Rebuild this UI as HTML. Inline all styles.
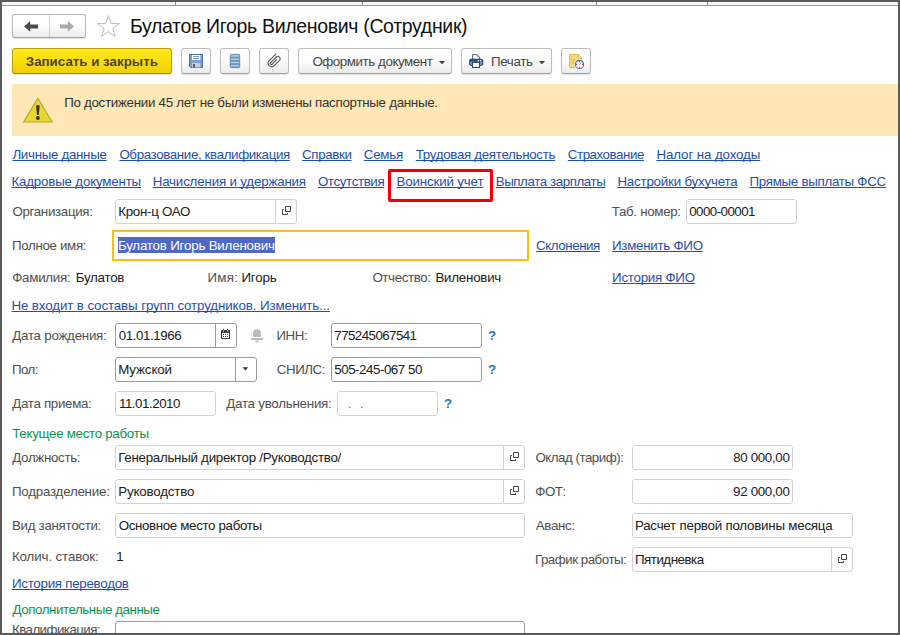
<!DOCTYPE html>
<html lang="ru">
<head>
<meta charset="utf-8">
<title>Булатов Игорь Виленович (Сотрудник)</title>
<style>
*{box-sizing:border-box}
html,body{margin:0;padding:0}
body{width:900px;height:635px;overflow:hidden;background:#fff;position:relative;font-family:"Liberation Sans",sans-serif;font-size:13px}
.abs,.t,.btn,.inp,.frame,svg{position:absolute}
.t{white-space:pre;line-height:16px;font-size:13.33px}
.ttl{font-size:19.5px;line-height:24px;color:#111}
.bb{font-weight:bold;color:#4b4628}
.bt{color:#444}
.msg{color:#333}
.lk{color:#1f4fae;text-decoration:underline;text-decoration-thickness:1px;text-decoration-skip-ink:none}
.lb{color:#505050}
.vl{color:#202020}
.sel{color:#fff}
.gr{color:#0c9254}
.q{font-weight:bold;color:#2175bf}
.dot{color:#777}
.btn{top:48px;height:26px;border:1px solid #bdbdbd;border-bottom-color:#a2a2a2;border-radius:3px;background:linear-gradient(#ffffff,#ffffff 40%,#ececec);box-shadow:0 1px 1px rgba(0,0,0,.12)}
.ybtn{background:linear-gradient(#ffe91e,#fbdc08 55%,#f1cf0c);border-color:#bba200;border-bottom-color:#9d8800}
.inp{height:25px;border:1px solid #d2d2d2;border-radius:3px;background:#fff}
.inp.dk{border-color:#9c9c9c}
.dv{position:absolute;top:0;bottom:0;width:1px;background:#d2d2d2}
.dk .dv{background:#9c9c9c}
</style>
</head>
<body>
<!-- nav buttons -->
<div class="btn" style="left:12px;top:14px;width:74px;height:24px;border-color:#b9b9b9;border-bottom-color:#9f9f9f"><div class="dv" style="left:36px;background:#d0d0d0"></div></div>
<svg style="left:12px;top:14px" width="74" height="24" viewBox="0 0 74 24">
  <path d="M12 12.4 L18.2 7 V10.4 H26 V14.4 H18.2 V17.8 Z" fill="#4a4a4a"/>
  <path d="M62 12.4 L55.8 7 V10.4 H48 V14.4 H55.8 V17.8 Z" fill="#a9a9a9"/>
</svg>
<!-- star -->
<svg style="left:96px;top:14px" width="26" height="24" viewBox="0 0 26 24">
  <path d="M12.4 1.6 L15.1 9.4 L23.4 9.5 L16.8 14.5 L19.2 22.4 L12.4 17.7 L5.6 22.4 L8 14.5 L1.4 9.5 L9.7 9.4 Z" fill="#fff" stroke="#b2b6bd" stroke-width=".9"/>
</svg>

<!-- toolbar -->
<div class="btn ybtn" style="left:12px;width:160px"></div>
<div class="btn" style="left:181px;width:30px"></div>
<div class="btn" style="left:220px;width:30px"></div>
<div class="btn" style="left:259px;width:30px"></div>
<div class="btn" style="left:298px;width:154px"></div>
<div class="btn" style="left:461px;width:91px"></div>
<div class="btn" style="left:561px;width:30px"></div>
<!-- toolbar icons -->
<svg style="left:188px;top:53px" width="16" height="16" viewBox="188 53 16 16">
  <path d="M189.5 54.5 H202.5 V67.4 H190.6 L189.5 66.3 Z" fill="#79a1d8" stroke="#4a6ea6" stroke-width="1"/>
  <rect x="192" y="55" width="8.3" height="5" fill="#fff"/>
  <rect x="193.2" y="56" width="6" height=".9" fill="#7391b6"/><rect x="193.2" y="58" width="6" height=".9" fill="#7391b6"/>
  <rect x="192" y="63" width="8.3" height="4.4" fill="#c9d1d6"/>
  <rect x="193.2" y="64" width="1.6" height="3.4" fill="#2c4568"/>
</svg>
<svg style="left:229px;top:53px" width="12" height="16" viewBox="229 53 12 16">
  <rect x="230.2" y="54.3" width="9.6" height="13.4" rx="1.2" fill="#6690b9" stroke="#5a82aa" stroke-width=".6"/>
  <g fill="#b3d0ec"><rect x="231" y="55.2" width="8" height="1.5"/><rect x="231" y="58.5" width="8" height="1.5"/><rect x="231" y="61.7" width="8" height="1.5"/><rect x="231" y="64.9" width="8" height="1.5"/></g>
</svg>
<svg style="left:259px;top:48px" width="30" height="26" viewBox="259 48 30 26">
  <g transform="translate(266.75,63.1) rotate(-45)"><path d="M12.8 0 H3.5 A3.52 3.52 0 0 0 3.5 7.04 H10.95 A2.34 2.34 0 0 0 10.95 2.37 H3.06 A1.06 1.06 0 0 0 3.06 4.5 H9.2" fill="none" stroke="#5c5c5c" stroke-width="1.15" stroke-linecap="round"/></g>
</svg>
<svg style="left:438px;top:60px" width="8" height="5" viewBox="0 0 8 5"><path d="M0.8 1 H7.2 L4 4.2 Z" fill="#3c3c3c"/></svg>
<svg style="left:538px;top:60px" width="8" height="5" viewBox="0 0 8 5"><path d="M0.8 1 H7.2 L4 4.2 Z" fill="#3c3c3c"/></svg>
<svg style="left:468px;top:53px" width="16" height="16" viewBox="468 53 16 16">
  <path d="M472.5 59.5 V54.6 H477 L479.5 57 V59.5 Z" fill="#fff" stroke="#56637c" stroke-width="1"/>
  <path d="M477 54.6 V57 H479.5 Z" fill="#7d8aa0"/>
  <rect x="469.6" y="59.2" width="13.2" height="6.2" rx="1.4" fill="#6f93c3" stroke="#1f426d" stroke-width="1"/>
  <rect x="470" y="59.5" width="12.4" height="2" fill="#254a78"/>
  <rect x="477.8" y="60" width="1.2" height="1.1" fill="#fff"/><rect x="480" y="60" width="1.2" height="1.1" fill="#fff"/>
  <rect x="472.5" y="62.5" width="7" height="5" fill="#fff" stroke="#2c4a70" stroke-width="1"/>
</svg>
<svg style="left:567px;top:52px" width="20" height="20" viewBox="567 52 20 20">
  <path d="M569.6 54.5 H578 L581.5 58 V67.4 H569.6 Z" fill="#f5da7a" stroke="#e0b83e" stroke-width="1"/>
  <path d="M578 54.5 V58 H581.5 Z" fill="#fbeeb8" stroke="#e0b83e" stroke-width=".8"/>
  <path d="M571.3 59.4 H575 M571.3 61.3 H574 M571.3 63.2 H575" stroke="#cdb877" stroke-width=".8"/>
  <circle cx="579.5" cy="64.4" r="5.2" fill="#fff"/>
  <circle cx="579.5" cy="64.4" r="4.1" fill="#fff" stroke="#3d77b6" stroke-width="1.2"/>
  <path d="M579.5 60.8 V62 M579.5 66.8 V68 M575.9 64.4 H577.1 M581.9 64.4 H583.1" stroke="#e0303a" stroke-width="1.1"/>
  <path d="M579.5 64.4 L581.2 62.8" stroke="#5b8fd0" stroke-width=".9"/>
</svg>

<!-- banner -->
<div class="abs" style="left:12px;top:84px;width:886px;height:52px;background:#ffe8b6"></div>
<svg style="left:22px;top:96px" width="32" height="28" viewBox="0 0 32 28">
  <path d="M15.9 2.2 L30.2 26 H1.6 Z" fill="#e9d533" stroke="#b9a425" stroke-width="1.2" stroke-linejoin="round"/>
  <path d="M14.1 9.8 Q15.9 8.4 17.7 9.8 L16.7 19 H15.1 Z" fill="#3a3200"/>
  <circle cx="15.9" cy="22" r="1.9" fill="#3a3200"/>
</svg>

<!-- red highlight -->
<div class="abs" style="left:388px;top:169px;width:105px;height:33px;border:3px solid #f00000;border-radius:2px"></div>

<!-- inputs -->
<div class="inp" style="left:115px;top:199px;width:182px"><div class="dv" style="left:159px"></div></div>
<div class="inp" style="left:686px;top:199px;width:111px"></div>
<div class="abs" style="left:112px;top:230px;width:417px;height:31px;border:2px solid #f7be17;background:#fff"></div>
<div class="abs" style="left:118px;top:237px;width:157px;height:16px;background:#4f68c6"></div>
<div class="inp dk" style="left:115px;top:323px;width:122px"><div class="dv" style="left:99px"></div></div>
<div class="inp dk" style="left:331px;top:323px;width:151px"></div>
<div class="inp dk" style="left:115px;top:357px;width:142px"><div class="dv" style="left:119px"></div></div>
<div class="inp dk" style="left:331px;top:357px;width:151px"></div>
<div class="inp" style="left:115px;top:391px;width:101px"></div>
<div class="inp" style="left:337px;top:391px;width:101px"></div>
<div class="inp" style="left:115px;top:445px;width:410px"><div class="dv" style="left:387px"></div></div>
<div class="inp" style="left:115px;top:479px;width:410px"><div class="dv" style="left:387px"></div></div>
<div class="inp" style="left:115px;top:513px;width:410px"></div>
<div class="inp" style="left:632px;top:445px;width:161px"></div>
<div class="inp" style="left:632px;top:479px;width:161px"></div>
<div class="inp" style="left:632px;top:513px;width:221px"></div>
<div class="inp" style="left:632px;top:547px;width:221px"><div class="dv" style="left:198px"></div></div>
<div class="inp dk" style="left:115px;top:621px;width:410px"></div>

<!-- open icons -->
<svg style="left:282px;top:206px" width="9" height="9" viewBox="0 0 9 9"><path d="M3.5 0.5 H8.5 V5.5 H3.5 Z M1.9 3.5 H0.5 V8.5 H5.5 V7.1" fill="none" stroke="#444"/></svg>
<svg style="left:510px;top:452px" width="9" height="9" viewBox="0 0 9 9"><path d="M3.5 0.5 H8.5 V5.5 H3.5 Z M1.9 3.5 H0.5 V8.5 H5.5 V7.1" fill="none" stroke="#444"/></svg>
<svg style="left:510px;top:486px" width="9" height="9" viewBox="0 0 9 9"><path d="M3.5 0.5 H8.5 V5.5 H3.5 Z M1.9 3.5 H0.5 V8.5 H5.5 V7.1" fill="none" stroke="#444"/></svg>
<svg style="left:838px;top:554px" width="9" height="9" viewBox="0 0 9 9"><path d="M3.5 0.5 H8.5 V5.5 H3.5 Z M1.9 3.5 H0.5 V8.5 H5.5 V7.1" fill="none" stroke="#444"/></svg>
<!-- calendar -->
<svg style="left:220px;top:328px" width="12" height="12" viewBox="220 328 12 12">
  <rect x="221" y="330" width="9" height="9" rx="1" fill="#3c3c3c"/>
  <rect x="222" y="333" width="7" height="5" fill="#fff"/>
  <rect x="223" y="328.8" width="1" height="1.6" fill="#3c3c3c"/><rect x="227" y="328.8" width="1" height="1.6" fill="#3c3c3c"/>
  <rect x="223" y="330.4" width="1" height="1.1" fill="#fff"/><rect x="227" y="330.4" width="1" height="1.1" fill="#fff"/>
  <g fill="#3c3c3c"><rect x="223" y="334" width="1" height="1"/><rect x="225" y="334" width="1" height="1"/><rect x="227" y="334" width="1" height="1"/><rect x="223" y="336" width="1" height="1"/><rect x="225" y="336" width="1" height="1"/><rect x="227" y="336" width="1" height="1"/></g>
</svg>
<!-- bell -->
<svg style="left:250px;top:328px" width="14" height="15" viewBox="250 328 14 15">
  <path d="M253 337 V333.2 A4 4 0 0 1 261 333.2 V337 Z" fill="#bdbdbd"/>
  <rect x="251" y="338" width="12" height="2" fill="#bdbdbd"/>
  <path d="M255 340.4 H259 A2 2 0 0 1 255 340.4 Z" fill="#bdbdbd"/>
</svg>
<!-- dropdown arrow -->
<svg style="left:242px;top:367px" width="7" height="4" viewBox="0 0 7 4"><path d="M0.6 0.3 H6.2 L3.4 3.4 Z" fill="#333"/></svg>

<span class="t ttl" style="left:129.92px;top:14px;letter-spacing:-0.335px;">Булатов Игорь Виленович (Сотрудник)</span>
<span class="t bb" style="left:25.81px;top:54px;">Записать и закрыть</span>
<span class="t bt" style="left:312.38px;top:54px;letter-spacing:-0.424px;">Оформить документ</span>
<span class="t bt" style="left:490.95px;top:54px;letter-spacing:-0.335px;">Печать</span>
<span class="t msg" style="left:64.15px;top:95px;letter-spacing:-0.282px;">По достижении 45 лет не были изменены паспортные данные.</span>
<span class="t lk" style="left:12.42px;top:147px;letter-spacing:-0.304px;">Личные данные</span>
<span class="t lk" style="left:119.38px;top:147px;letter-spacing:-0.368px;">Образование, квалификация</span>
<span class="t lk" style="left:302.12px;top:147px;letter-spacing:-0.382px;">Справки</span>
<span class="t lk" style="left:363.81px;top:147px;letter-spacing:-0.261px;">Семья</span>
<span class="t lk" style="left:415.77px;top:147px;letter-spacing:-0.311px;">Трудовая деятельность</span>
<span class="t lk" style="left:567.82px;top:147px;letter-spacing:-0.454px;">Страхование</span>
<span class="t lk" style="left:656.45px;top:147px;letter-spacing:-0.108px;">Налог на доходы</span>
<span class="t lk" style="left:11.45px;top:174px;letter-spacing:-0.185px;">Кадровые документы</span>
<span class="t lk" style="left:152.70px;top:174px;letter-spacing:-0.173px;">Начисления и удержания</span>
<span class="t lk" style="left:317.88px;top:174px;letter-spacing:-0.370px;">Отсутствия</span>
<span class="t lk" style="left:396.45px;top:174px;letter-spacing:-0.150px;">Воинский учет</span>
<span class="t lk" style="left:495.70px;top:174px;letter-spacing:-0.418px;">Выплата зарплаты</span>
<span class="t lk" style="left:617.45px;top:174px;letter-spacing:-0.208px;">Настройки бухучета</span>
<span class="t lk" style="left:749.45px;top:174px;letter-spacing:-0.278px;">Прямые выплаты ФСС</span>
<span class="t lb" style="left:12.38px;top:204px;letter-spacing:-0.321px;">Организация:</span>
<span class="t vl" style="left:118.20px;top:204px;letter-spacing:-0.284px;">Крон-ц ОАО</span>
<span class="t lb" style="left:611.67px;top:204px;letter-spacing:-0.304px;">Таб. номер:</span>
<span class="t vl" style="left:689.24px;top:204px;letter-spacing:-0.552px;">0000-00001</span>
<span class="t lb" style="left:11.95px;top:238px;letter-spacing:-0.337px;">Полное имя:</span>
<span class="t sel" style="left:117.95px;top:238px;letter-spacing:-0.198px;">Булатов Игорь Виленович</span>
<span class="t lk" style="left:536.07px;top:238px;letter-spacing:-0.439px;">Склонения</span>
<span class="t lk" style="left:612.05px;top:238px;letter-spacing:-0.265px;">Изменить ФИО</span>
<span class="t lb" style="left:12.25px;top:270px;letter-spacing:-0.271px;">Фамилия:</span>
<span class="t vl" style="left:75.70px;top:270px;letter-spacing:-0.244px;">Булатов</span>
<span class="t lb" style="left:207.45px;top:270px;letter-spacing:0.288px;">Имя:</span>
<span class="t vl" style="left:241.45px;top:270px;letter-spacing:-0.162px;">Игорь</span>
<span class="t lb" style="left:372.38px;top:270px;letter-spacing:-0.383px;">Отчество:</span>
<span class="t vl" style="left:435.45px;top:270px;letter-spacing:-0.236px;">Виленович</span>
<span class="t lk" style="left:612.05px;top:270px;letter-spacing:-0.244px;">История ФИО</span>
<span class="t lk" style="left:11.45px;top:298px;letter-spacing:-0.110px;">Не входит в составы групп сотрудников. Изменить...</span>
<span class="t lb" style="left:12.25px;top:328px;letter-spacing:-0.245px;">Дата рождения:</span>
<span class="t vl" style="left:118.74px;top:328px;letter-spacing:-0.407px;">01.01.1966</span>
<span class="t lb" style="left:276.45px;top:328px;letter-spacing:-0.442px;">ИНН:</span>
<span class="t vl" style="left:334.34px;top:328px;letter-spacing:-0.569px;">775245067541</span>
<span class="t q" style="left:487.95px;top:328px;">?</span>
<span class="t lb" style="left:11.95px;top:362px;letter-spacing:-0.533px;">Пол:</span>
<span class="t vl" style="left:118.20px;top:362px;letter-spacing:-0.113px;">Мужской</span>
<span class="t lb" style="left:276.81px;top:362px;letter-spacing:-0.447px;">СНИЛС:</span>
<span class="t vl" style="left:334.25px;top:362px;letter-spacing:-0.464px;">505-245-067 50</span>
<span class="t q" style="left:487.95px;top:362px;">?</span>
<span class="t lb" style="left:12.25px;top:396px;letter-spacing:-0.311px;">Дата приема:</span>
<span class="t vl" style="left:118.95px;top:396px;letter-spacing:-0.469px;">11.01.2010</span>
<span class="t lb" style="left:226.25px;top:396px;letter-spacing:-0.243px;">Дата увольнения:</span>
<span class="t dot" style="left:347.65px;top:396px;">.</span>
<span class="t dot" style="left:359.65px;top:396px;">.</span>
<span class="t q" style="left:443.95px;top:396px;">?</span>
<span class="t gr" style="left:12.27px;top:426px;letter-spacing:-0.294px;">Текущее место работы</span>
<span class="t lb" style="left:12.25px;top:450px;letter-spacing:-0.322px;">Должность:</span>
<span class="t vl" style="left:118.20px;top:450px;letter-spacing:-0.268px;">Генеральный директор /Руководство/</span>
<span class="t lb" style="left:535.38px;top:450px;letter-spacing:-0.486px;">Оклад (тариф):</span>
<span class="t vl" style="left:733.13px;top:450px;letter-spacing:-0.323px;">80 000,00</span>
<span class="t lb" style="left:11.95px;top:484px;letter-spacing:-0.222px;">Подразделение:</span>
<span class="t vl" style="left:118.20px;top:484px;letter-spacing:-0.169px;">Руководство</span>
<span class="t lb" style="left:535.25px;top:484px;letter-spacing:-0.457px;">ФОТ:</span>
<span class="t vl" style="left:733.07px;top:484px;letter-spacing:-0.314px;">92 000,00</span>
<span class="t lb" style="left:11.95px;top:518px;letter-spacing:-0.296px;">Вид занятости:</span>
<span class="t vl" style="left:118.63px;top:518px;letter-spacing:-0.347px;">Основное место работы</span>
<span class="t lb" style="left:535.81px;top:518px;letter-spacing:-0.346px;">Аванс:</span>
<span class="t vl" style="left:634.95px;top:518px;letter-spacing:-0.224px;">Расчет первой половины месяца</span>
<span class="t lb" style="left:11.95px;top:549px;letter-spacing:-0.121px;">Колич. ставок:</span>
<span class="t vl" style="left:116.20px;top:549px;">1</span>
<span class="t lb" style="left:534.95px;top:552px;letter-spacing:-0.488px;">График работы:</span>
<span class="t vl" style="left:634.95px;top:552px;letter-spacing:-0.481px;">Пятидневка</span>
<span class="t lk" style="left:11.95px;top:576px;letter-spacing:-0.263px;">История переводов</span>
<span class="t gr" style="left:12.45px;top:602px;letter-spacing:-0.434px;">Дополнительные данные</span>
<span class="t lb" style="left:11.95px;top:622px;letter-spacing:-0.550px;">Квалификация:</span>
<!-- window frame -->
<div class="abs" style="left:0;top:0;width:900px;height:2px;background:#5b5b5b"></div>
<div class="abs" style="left:0;top:0;width:2px;height:635px;background:#5b5b5b"></div>
<div class="abs" style="left:898px;top:0;width:2px;height:635px;background:#5b5b5b"></div>
<div class="abs" style="left:0;top:633px;width:900px;height:2px;background:#5b5b5b"></div>
<div class="abs" style="left:2px;top:2px;width:896px;height:3px;background:#f7f7f7"></div>
<div class="abs" style="left:2px;top:5px;width:896px;height:1px;background:#9a9a9a"></div>
<div class="abs" style="left:175px;top:2px;width:1px;height:3px;background:#8a8a8a"></div>
<div class="abs" style="left:362px;top:2px;width:1px;height:3px;background:#8a8a8a"></div>
<div class="abs" style="left:596px;top:2px;width:1px;height:3px;background:#8a8a8a"></div>
<div class="abs" style="left:707px;top:2px;width:1px;height:3px;background:#8a8a8a"></div>


</body>
</html>
